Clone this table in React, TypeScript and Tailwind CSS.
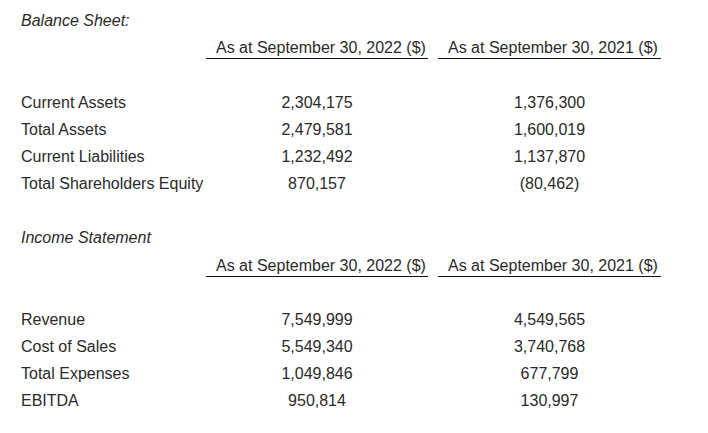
import React from 'react';

type Row = { label: string; current: string; prior: string };

const balanceRows: Row[] = [
  { label: 'Current Assets', current: '2,304,175', prior: '1,376,300' },
  { label: 'Total Assets', current: '2,479,581', prior: '1,600,019' },
  { label: 'Current Liabilities', current: '1,232,492', prior: '1,137,870' },
  { label: 'Total Shareholders Equity', current: '870,157', prior: '(80,462)' },
];

const incomeRows: Row[] = [
  { label: 'Revenue', current: '7,549,999', prior: '4,549,565' },
  { label: 'Cost of Sales', current: '5,549,340', prior: '3,740,768' },
  { label: 'Total Expenses', current: '1,049,846', prior: '677,799' },
  { label: 'EBITDA', current: '950,814', prior: '130,997' },
];

function Section({ title, rows, income }: { title: string; rows: Row[]; income?: boolean }) {
  return (
    <div>
      <p className="italic leading-[20px]">{title}</p>
      <div
        className={`grid grid-cols-[175px_222px_223px] gap-x-[10px] ${income ? 'mt-[8px]' : 'mt-[7px]'}`}
      >
        <div />
        <div className="border-b border-[#111] pl-[10px] leading-[20px] whitespace-nowrap">
          As at September 30, 2022 ($)
        </div>
        <div className="border-b border-[#111] pl-[10px] leading-[20px] whitespace-nowrap">
          As at September 30, 2021 ($)
        </div>
      </div>
      <div className={income ? 'mt-[29px]' : 'mt-[30px]'}>
        {rows.map((r) => (
          <div key={r.label} className="grid grid-cols-[175px_222px_223px] gap-x-[10px] leading-[27px]">
            <div className="whitespace-nowrap">{r.label}</div>
            <div className="text-center">{r.current}</div>
            <div className="text-center">{r.prior}</div>
          </div>
        ))}
      </div>
    </div>
  );
}

const App: React.FC = () => {
  return (
    <div className="min-h-screen bg-white pl-[21px] pt-[11px] text-[16px] text-[#2a2a2a] font-['Liberation_Sans',Arial,sans-serif]">
      <Section title="Balance Sheet:" rows={balanceRows} />
      <div className="mt-[31px]">
        <Section title="Income Statement" rows={incomeRows} income />
      </div>
    </div>
  );
};

export default App;
